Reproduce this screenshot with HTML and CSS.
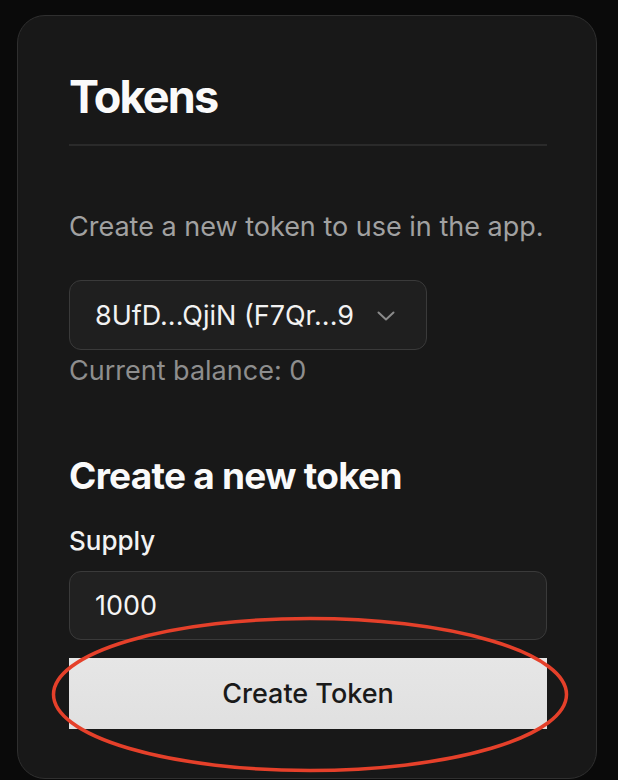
FILE: index.html
```html
<!DOCTYPE html>
<html lang="en">
<head>
<meta charset="utf-8">
<title>Tokens</title>
<link rel="stylesheet" href="styles.css">
</head>
<body>
<main class="card">
  <h1 class="title">Tokens</h1>
  <p class="desc">Create a new token to use in the app.</p>
  <div class="select">
    <span class="select-text">8UfD...QjiN (F7Qr...9</span>
    <svg class="chevron" width="18" height="10" viewBox="0 0 18 10"><path d="M1.5 1.5 L9 8.5 L16.5 1.5" fill="none" stroke="#8a8a8a" stroke-width="2" stroke-linecap="round" stroke-linejoin="round"/></svg>
  </div>
  <p class="balance">Current balance: 0</p>
  <h2 class="subtitle">Create a new token</h2>
  <label class="label">Supply</label>
  <div class="input">1000</div>
  <button class="btn">Create Token</button>
  <svg class="annot" width="518" height="157" viewBox="0 0 518 157"><ellipse cx="259" cy="78.5" rx="256.5" ry="76" fill="none" stroke="#e5402a" stroke-width="3.5"/></svg>
</main>
</body>
</html>
```

FILE: styles.css
```css
* { box-sizing: border-box; }
html, body { margin: 0; padding: 0; }
body {
  background: #0a0a0a;
  font-family: Inter, "Noto Sans", "Liberation Sans", sans-serif;
  width: 618px;
  height: 780px;
  overflow: hidden;
}
.card {
  position: relative;
  margin: 15px 0 0 17px;
  width: 580px;
  height: 764px;
  background: #181818;
  border: 1px solid #2f2f2f;
  border-radius: 28px;
  padding: 54px 49px 0 51px;
  display: flex;
  flex-direction: column;
  align-items: flex-start;
}
.title {
  margin: 0;
  align-self: stretch;
  font-size: 45px;
  font-weight: 700;
  letter-spacing: -0.04em;
  line-height: 54px;
  color: #fafafa;
  padding-bottom: 20px;
  border-bottom: 2px solid #2a2a2a;
}
.desc {
  margin: 61px 0 0;
  font-size: 27px;
  white-space: nowrap;
  line-height: 40px;
  color: #a1a1a1;
}
.select {
  margin-top: 33px;
  width: 358px;
  height: 70px;
  background: #1f1f1f;
  border: 1px solid #3a3a3a;
  border-radius: 12px;
  display: flex;
  align-items: center;
  justify-content: space-between;
  padding: 0 31px 0 25px;
}
.select-text {
  font-size: 27px;
  color: #f2f2f2;
  white-space: nowrap;
  overflow: hidden;
  max-width: 264px;
}
.chevron { flex: none; margin-top: 2px; }
.balance {
  margin: 1px 0 0;
  font-size: 27px;
  line-height: 40px;
  color: #8e8e8e;
}
.subtitle {
  margin: 63px 0 0;
  font-size: 37px;
  font-weight: 700;
  letter-spacing: -0.02em;
  line-height: 44px;
  color: #fafafa;
}
.label {
  margin-top: 25px;
  font-size: 26px;
  font-weight: 500;
  line-height: 36px;
  color: #f2f2f2;
}
.input {
  margin-top: 12px;
  align-self: stretch;
  height: 69px;
  background: #212121;
  border: 1px solid #3a3a3a;
  border-radius: 12px;
  display: flex;
  align-items: center;
  padding-left: 25px;
  font-size: 27px;
  color: #f5f5f5;
}
.btn {
  margin-top: 18px;
  align-self: stretch;
  height: 71px;
  background: linear-gradient(#e6e6e6, #e0e0e0);
  border: none;
  border-radius: 0;
  font-family: inherit;
  font-size: 27px;
  font-weight: 500;
  color: #1a1a1a;
}
.annot {
  position: absolute;
  left: 33px;
  top: 600px;
  pointer-events: none;
}
```
